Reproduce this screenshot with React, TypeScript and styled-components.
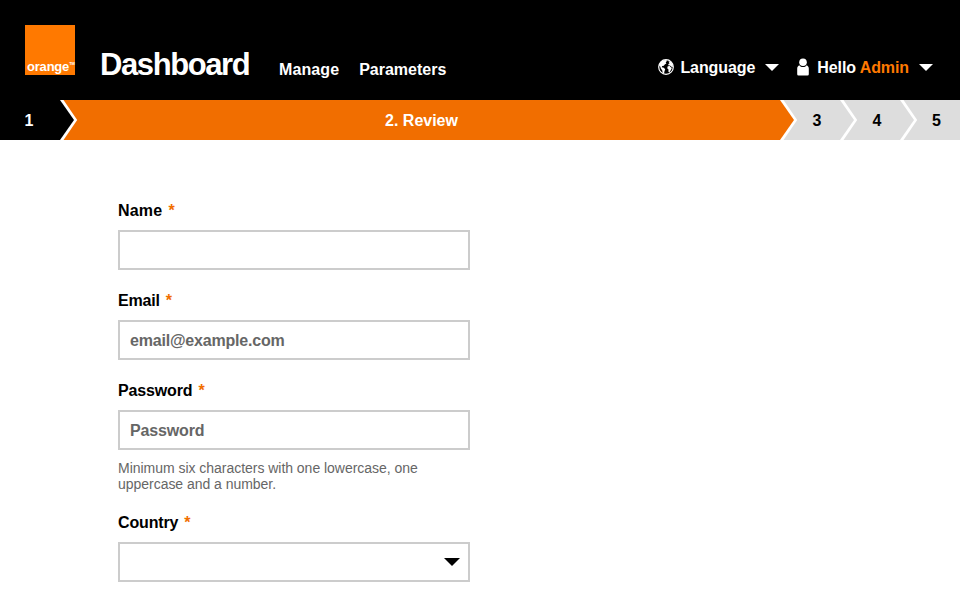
import React from "react";
import styled, { createGlobalStyle } from "styled-components";

const GlobalStyle = createGlobalStyle`
  *, *::before, *::after { box-sizing: border-box; }
  body {
    margin: 0;
    background: #fff;
    color: #000;
    font: 700 16px/20px "Liberation Sans", Arial, sans-serif;
    overflow: hidden;
  }
`;

const Header = styled.header`
  display: flex;
  align-items: flex-start;
  height: 100px;
  padding: 25px 27px 0 25px;
  background: #000;
  color: #fff;
`;

const Logo = styled.div`
  display: flex;
  align-items: flex-end;
  width: 50px;
  height: 50px;
  padding-left: 2px;
  background: #ff7900;
  font-size: 13px;
  line-height: 17px;
  white-space: nowrap;
`;

const Trademark = styled.span`
  margin-bottom: 6px;
  font-size: 4px;
  line-height: 10px;
`;

const Title = styled.h1`
  width: 155px;
  margin: 22px 0 0 25px;
  font-size: 31px;
  line-height: 36px;
  letter-spacing: -1.4px;
`;

const Nav = styled.nav`
  display: flex;
  gap: 20px;
  margin: 35px 0 0 24px;
`;

const Text = styled.span<{ $spacing?: number }>`
  letter-spacing: ${({ $spacing = 0 }) => $spacing}px;
  white-space: nowrap;
`;

const UserMenu = styled.div`
  display: flex;
  gap: 18px;
  margin: 31px 0 0 auto;
`;

const MenuButton = styled.div`
  display: flex;
  align-items: center;
`;

const MenuText = styled(Text)`
  padding-top: 2px;
`;

const IconSlot = styled.span<{ $gap: number }>`
  display: flex;
  margin-right: ${({ $gap }) => $gap}px;
`;

const Accent = styled.span`
  color: #ff7900;
`;

const Caret = styled.span<{ $size: number }>`
  width: 0;
  height: 0;
  border: solid transparent;
  border-width: ${({ $size }) => $size}px ${({ $size }) => $size}px 0;
  border-top-color: currentColor;
`;

const MenuCaret = styled(Caret)`
  margin-left: 10px;
`;

const Steps = styled.ol`
  display: flex;
  height: 40px;
  margin: 0;
  padding: 0;
  list-style: none;
`;

const tones = {
  done: { background: "#000", color: "#fff" },
  current: { background: "#f16e00", color: "#fff" },
  next: { background: "#ddd", color: "#000" },
};
type Tone = keyof typeof tones;

const StepItem = styled.li<{ $tone: Tone; $shift: number }>`
  position: relative;
  display: flex;
  flex: ${({ $tone }) => ($tone === "current" ? "1" : "0 0 60px")};
  align-items: center;
  justify-content: center;
  padding-top: 2px;
  padding-left: ${({ $shift }) => Math.max($shift, 0)}px;
  padding-right: ${({ $shift }) => Math.max(-$shift, 0)}px;
  background: ${({ $tone }) => tones[$tone].background};
  color: ${({ $tone }) => tones[$tone].color};
`;

const Chevron = styled.svg`
  position: absolute;
  z-index: 1;
  top: 0;
  left: 100%;
`;

const Form = styled.form`
  display: flex;
  flex-direction: column;
  gap: 20px;
  width: 352px;
  margin: 60px 0 0 118px;
`;

const Field = styled.div`
  display: flex;
  flex-direction: column;
`;

const Label = styled.label`
  display: flex;
  gap: 6px;
  padding-top: 1px;
  margin-bottom: 9px;
`;

const Required = styled.span`
  color: #f16e00;
`;

const Input = styled.input<{ $spacing?: number }>`
  width: 100%;
  height: 40px;
  padding: 2px 10px 0;
  border: 2px solid #ccc;
  border-radius: 0;
  background: #fff;
  font: inherit;
  letter-spacing: ${({ $spacing = 0 }) => $spacing}px;

  &::placeholder {
    color: #666;
    opacity: 1;
  }
`;

const Help = styled.p`
  margin: 10px 0 0;
  color: #666;
  font-size: 14px;
  font-weight: 400;
  line-height: 16px;
  letter-spacing: -0.03px;
  white-space: nowrap;
`;

const SelectBox = styled.div`
  display: flex;
  align-items: center;
  justify-content: flex-end;
  height: 40px;
  padding-right: 8px;
  border: 2px solid #ccc;
`;

const GlobeIcon = () => (
  <svg width="16" height="16" viewBox="0 0 16 16">
    <circle cx="8" cy="8" r="7.3" fill="#000" stroke="#fff" strokeWidth="1.2" />
    <path
      fill="#fff"
      d="M1 6.2 2.7 3 5.4 1.2 8.6.9 8.8 2.3 7.7 3.3 8.4 4.5 6.7 5.4 5.9 6.8 4.2 7.1 3.8 8.3 5.8 8.8 7.2 10.2 6.5 12.3 6 14.8 4.7 14.3 4.3 11.5 2.9 9.6 2.2 7.5Z M10.4 2.5 12.4 2.4 14.2 4.8 15 7.5 13.8 8.5 13.2 7.2 11.8 6.6 10.2 6.2 10.4 4.9 11.6 4.2Z M9.7 7.2 11.7 7 13.1 8.6 13.8 9.3 12.6 11.5 11.4 13.4 10.4 12.7 10.5 10.6 9.2 9.2Z"
    />
  </svg>
);

const UserIcon = () => (
  <svg width="12" height="18" viewBox="0 0 12 18">
    <circle cx="6" cy="4.2" r="3.8" fill="#fff" />
    <path
      fill="#fff"
      d="M2.2 7.2C3.2 8.5 4.5 9 6 9s2.8-.5 3.8-1.8C11.2 8 11.8 9.1 11.8 10.6V16.2Q11.8 17.5 10.5 17.5H1.5Q.2 17.5.2 16.2V10.6C.2 9.1.8 8 2.2 7.2Z"
    />
  </svg>
);

interface StepProps {
  label: string;
  tone: Tone;
  shift: number;
  last?: boolean;
}

const Step = ({ label, tone, shift, last }: StepProps) => (
  <StepItem $tone={tone} $shift={shift}>
    {label}
    {!last && (
      <Chevron width="18" height="40" viewBox="0 0 18 40">
        <path fill="#fff" d="M0 0H3.5L17.2 20 3.5 40H0Z" />
        <path fill={tones[tone].background} d="M0 0 14 20 0 40Z" />
      </Chevron>
    )}
  </StepItem>
);

interface FieldLabelProps {
  id: string;
  text: string;
  spacing?: number;
}

const FieldLabel = ({ id, text, spacing }: FieldLabelProps) => (
  <Label htmlFor={id}>
    <Text $spacing={spacing}>{text}</Text>
    <Required>*</Required>
  </Label>
);

export default function App() {
  return (
    <>
      <GlobalStyle />
      <Header>
        <Logo>
          <Text $spacing={-0.2}>orange</Text>
          <Trademark>TM</Trademark>
        </Logo>
        <Title>Dashboard</Title>
        <Nav>
          <Text $spacing={0.1}>Manage</Text>
          <Text>Parameters</Text>
        </Nav>
        <UserMenu>
          <MenuButton>
            <IconSlot $gap={6}>
              <GlobeIcon />
            </IconSlot>
            <MenuText $spacing={-0.08}>Language</MenuText>
            <MenuCaret $size={7} />
          </MenuButton>
          <MenuButton>
            <IconSlot $gap={8}>
              <UserIcon />
            </IconSlot>
            <MenuText $spacing={-0.1}>
              Hello <Accent>Admin</Accent>
            </MenuText>
            <MenuCaret $size={7} />
          </MenuButton>
        </UserMenu>
      </Header>
      <Steps>
        <Step label="1" tone="done" shift={-2} />
        <Step label="2. Review" tone="current" shift={3} />
        <Step label="3" tone="next" shift={14} />
        <Step label="4" tone="next" shift={14} />
        <Step label="5" tone="next" shift={13} last />
      </Steps>
      <Form>
        <Field>
          <FieldLabel id="name" text="Name" spacing={0.2} />
          <Input id="name" />
        </Field>
        <Field>
          <FieldLabel id="email" text="Email" spacing={-0.2} />
          <Input
            id="email"
            type="email"
            placeholder="email@example.com"
            $spacing={-0.2}
          />
        </Field>
        <Field>
          <FieldLabel id="password" text="Password" spacing={-0.15} />
          <Input
            id="password"
            type="password"
            placeholder="Password"
            $spacing={-0.15}
          />
          <Help>
            Minimum six characters with one lowercase, one
            <br />
            uppercase and a number.
          </Help>
        </Field>
        <Field>
          <FieldLabel id="country" text="Country" spacing={-0.15} />
          <SelectBox id="country">
            <Caret $size={8} />
          </SelectBox>
        </Field>
      </Form>
    </>
  );
}
